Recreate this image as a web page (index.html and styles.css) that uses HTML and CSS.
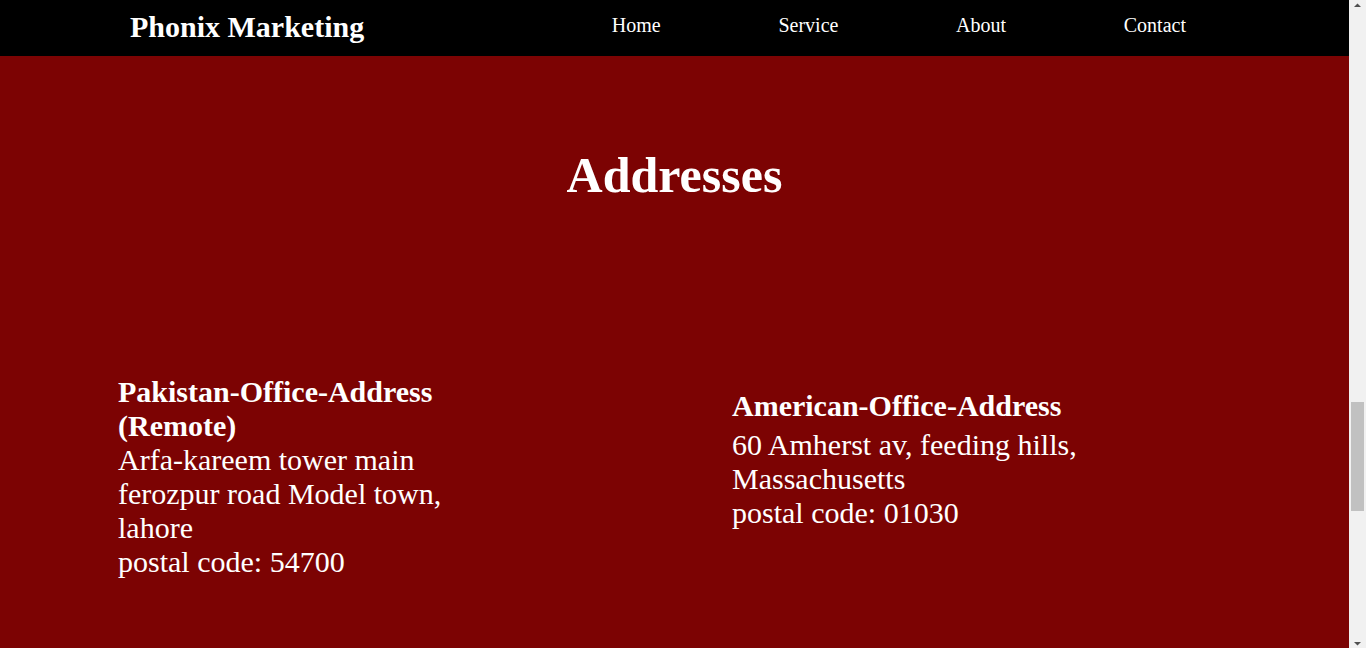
FILE: index.html
```html
<!DOCTYPE html>
<html lang="en">
<head>
<meta charset="utf-8">
<title>Phonix Marketing</title>
<link rel="stylesheet" href="styles.css">
</head>
<body>
<div class="page">
  <nav class="navbar">
    <div class="brand">Phonix Marketing</div>
    <ul class="nav-links">
      <li><a href="#home">Home</a></li>
      <li><a href="#service">Service</a></li>
      <li><a href="#about">About</a></li>
      <li><a href="#contact">Contact</a></li>
    </ul>
  </nav>
  <section id="addresses" class="addresses">
    <h2 class="addresses-title">Addresses</h2>
    <div class="address-grid">
      <div class="address address-pk"><b>Pakistan-Office-Address (Remote)</b><br>Arfa-kareem tower main ferozpur road Model town, lahore<br>postal code: 54700</div>
      <div class="address address-us">
        <h3 class="address-head">American-Office-Address</h3>
        <p class="address-body">60 Amherst av, feeding hills, Massachusetts<br>postal code: 01030</p>
      </div>
    </div>
  </section>
</div>
<div class="scrollbar" aria-hidden="true">
  <svg class="sb-button" width="17" height="17" viewBox="0 0 17 17"><polygon points="5,7 8.5,3.5 12,7" fill="#505050"/></svg>
  <div class="sb-track"><div class="sb-thumb"></div></div>
  <svg class="sb-button" width="17" height="17" viewBox="0 0 17 17"><polygon points="5,11 8.5,14.5 12,11" fill="#505050"/></svg>
</div>
</body>
</html>
```

FILE: styles.css
```css
html, body {
  margin: 0;
  padding: 0;
  height: 100%;
  overflow: hidden;
}
body {
  display: flex;
  background: #7c0303;
  color: #ffffff;
  font-family: "Liberation Serif", "Times New Roman", serif;
}
.page {
  flex: 1;
  min-width: 0;
  display: flex;
  flex-direction: column;
  background: #7c0303;
}
.navbar {
  height: 56px;
  flex: none;
  background: #000000;
  display: flex;
  align-items: flex-start;
  padding: 0 163px 0 130px;
}
.brand {
  font-size: 30px;
  font-weight: bold;
  line-height: 34px;
  padding-top: 10px;
}
.nav-links {
  list-style: none;
  margin: 0 0 0 auto;
  padding: 13px 0 0 0;
  display: flex;
  gap: 117.7px;
  font-size: 20px;
  line-height: 24px;
}
.nav-links a {
  color: #ffffff;
  text-decoration: none;
}
.addresses {
  flex: 1;
  padding-top: 90px;
}
.addresses-title {
  margin: 0;
  text-align: center;
  font-size: 50px;
  line-height: 58px;
  font-weight: bold;
}
.address-grid {
  display: grid;
  grid-template-columns: 380px 400px;
  column-gap: 234px;
  align-items: start;
  padding-left: 118px;
  margin-top: 171px;
  font-size: 30px;
  line-height: 34px;
}
.address-us {
  margin-top: 14px;
}
.address-head {
  margin: 0 0 5px 0;
  font-size: 30px;
  line-height: 34px;
  font-weight: bold;
}
.address-body {
  margin: 0;
}
.scrollbar {
  width: 17px;
  flex: none;
  display: flex;
  flex-direction: column;
  background: #f1f1f1;
}
.sb-button {
  display: block;
  flex: none;
}
.sb-track {
  flex: 1;
  padding: 385px 2px 0 2px;
}
.sb-thumb {
  height: 109px;
  background: #c1c1c1;
}
```
